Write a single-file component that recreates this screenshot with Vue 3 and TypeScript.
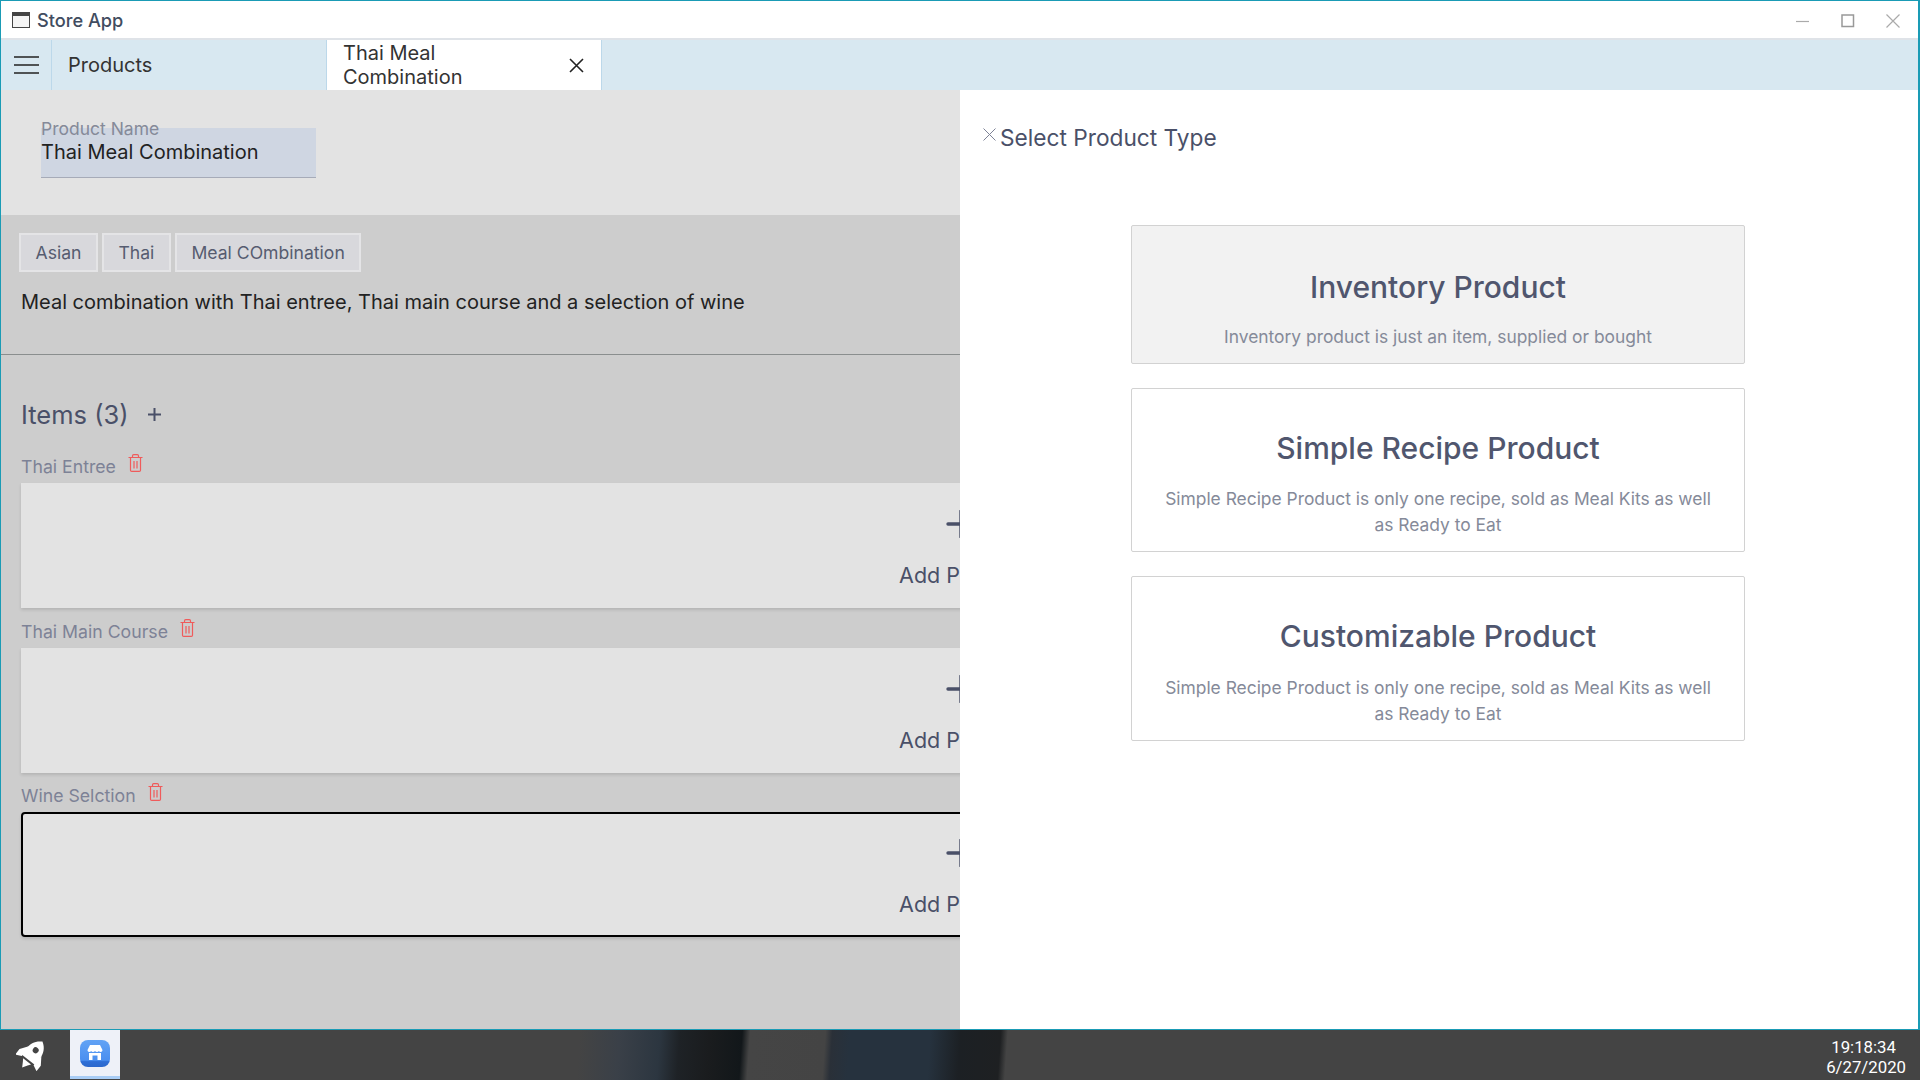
<template>
    <div class="desktop">
        <div class="window">
            <div class="titlebar">
                <svg class="app-icon" width="18" height="16" viewBox="0 0 18 16">
                    <rect x="0.5" y="0.5" width="17" height="15" fill="#dcdcdc" stroke="#444"/>
                    <rect x="1" y="1" width="16" height="3" fill="#444"/>
                    <rect x="1" y="4" width="16" height="11" fill="#f4f4f4"/>
                </svg>
                <span class="app-title">Store App</span>
                <div class="win-controls">
                    <svg width="14" height="14" viewBox="0 0 14 14"><path d="M0 7.500h13" stroke="#aaa" stroke-width="1.2"/></svg>
                    <svg width="14" height="14" viewBox="0 0 14 14"><rect x="1" y="1" width="11.500" height="11.500" fill="none" stroke="#999" stroke-width="1.500"/></svg>
                    <svg width="14" height="14" viewBox="0 0 14 14"><path d="M0.500 0.500l13 13M13.500 0.500l-13 13" stroke="#aaa" stroke-width="1.2"/></svg>
                </div>
            </div>
            <div class="tabbar">
                <div class="menu-btn">
                    <svg width="25" height="18" viewBox="0 0 25 18"><path d="M0 1h25M0 9h25M0 17h25" stroke="#222" stroke-width="1.700"/></svg>
                </div>
                <div class="tab">Products</div>
                <div class="tab tab-active">
                    <span class="tab-label">Thai Meal Combination</span>
                    <svg width="15" height="15" viewBox="0 0 15 15"><path d="M1 1l13 13M14 1L1 14" stroke="#222" stroke-width="1.600"/></svg>
                </div>
            </div>
            <div class="body">
                <div class="editor">
                    <div class="name-section">
                        <div class="name-field">
                            <label class="name-label">Product Name</label>
                            <div class="name-value">Thai Meal Combination</div>
                        </div>
                    </div>
                    <div class="details">
                        <div class="tags">
                            <span v-for="tag in tags" :key="tag" class="tag">{{ tag }}</span>
                        </div>
                        <p class="description">Meal combination with Thai entree, Thai main course and a selection of wine</p>
                    </div>
                    <div class="items">
                        <div class="items-head">
                            <span>Items ({{ groups.length }})</span>
                            <svg width="15" height="15" viewBox="0 0 15 15"><path d="M7.500 1v13M1 7.500h13" stroke="#4a5068" stroke-width="2"/></svg>
                        </div>
                        <div v-for="group in groups" :key="group.name" class="group">
                            <div class="group-head">
                                <span class="group-name">{{ group.name }}</span>
                                <svg class="trash" width="15" height="18" viewBox="0 0 15 18" fill="none" stroke="#ef5b5b" stroke-width="1.200">
                                    <path d="M0.500 3.500h14M4.500 3.500V2c0-.7.500-1.300 1.200-1.300h3.600c.7 0 1.200.6 1.200 1.300v1.500M2.500 3.500v12.700c0 .7.500 1.200 1.200 1.200h7.600c.7 0 1.200-.5 1.200-1.200V3.500M6 7v7.500M9 7v7.500"/>
                                </svg>
                            </div>
                            <div class="group-card" :class="{ selected: group.selected }">
                                <svg width="30" height="28" viewBox="0 0 30 28"><path d="M15 1v26M2 14h26" stroke="#4a5068" stroke-width="3.400" stroke-linecap="round"/></svg>
                                <span class="add-label">Add Product</span>
                            </div>
                        </div>
                    </div>
                </div>
                <aside class="drawer">
                    <div class="drawer-head">
                        <svg class="drawer-close" width="13" height="13" viewBox="0 0 13 13"><path d="M0.500 0.500l12 12M12.500 0.500l-12 12" stroke="#7d8296" stroke-width="1"/></svg>
                        <span>Select Product Type</span>
                    </div>
                    <div class="types">
                        <div v-for="type in types" :key="type.title" class="type-card" :class="{ hovered: type.hovered }">
                            <h3>{{ type.title }}</h3>
                            <p>{{ type.text }}</p>
                        </div>
                    </div>
                </aside>
            </div>
        </div>
        <div class="taskbar">
            <svg class="rocket" width="32" height="32" viewBox="0 0 32 32">
                <g transform="rotate(38 16 16)">
                    <path fill="#fff" d="M16 -1c6 3.500 8.500 9 8.500 15V22h-17v-8C7.500 8 10 2.500 16 -1z"/>
                    <path fill="#fff" d="M8 11L2.500 19v7l6-3zM24 11l5.500 8v7l-6-3z"/>
                    <path fill="#fff" d="M11 24h10l-2 3-3 5-3-5z"/>
                    <circle cx="16" cy="10" r="3" fill="#444"/>
                </g>
            </svg>
            <div class="task-app">
                <svg width="30" height="27" viewBox="0 0 30 27">
                    <defs>
                        <linearGradient id="appFill" x1="0" y1="0" x2="0" y2="1">
                            <stop offset="0" stop-color="#62a3f5"/>
                            <stop offset="0.75" stop-color="#4a8ff0"/>
                            <stop offset="0.8" stop-color="#2f6fd6"/>
                            <stop offset="1" stop-color="#2c68cc"/>
                        </linearGradient>
                    </defs>
                    <rect width="30" height="27" rx="8" fill="url(#appFill)"/>
                    <path fill="#fff" d="M10 5h10l2.500 5c0 1.200-.8 2-1.800 2-.8 0-1.400-.4-1.800-1-.4.600-1.100 1-1.900 1s-1.500-.4-2-1c-.5.600-1.200 1-2 1s-1.500-.4-1.900-1c-.4.600-1 1-1.800 1-1 0-1.800-.8-1.800-2z"/>
                    <path fill="#fff" d="M9 13h12v7h-3.500v-4.500h-5V20H9z"/>
                </svg>
            </div>
            <div class="jeans"></div>
            <div class="clock">
                <span class="clock-time">19:18:34</span>
                <span>6/27/2020</span>
            </div>
        </div>
    </div>
</template>

<script setup lang="ts">
interface Group {
    name: string
    selected?: boolean
}

interface ProductType {
    title: string
    text: string
    hovered?: boolean
}

const tags: string[] = ['Asian', 'Thai', 'Meal COmbination']

const groups: Group[] = [
    {name: 'Thai Entree'},
    {name: 'Thai Main Course'},
    {name: 'Wine Selction', selected: true},
]

const types: ProductType[] = [
    {title: 'Inventory Product', text: 'Inventory product is just an item, supplied or bought', hovered: true},
    {title: 'Simple Recipe Product', text: 'Simple Recipe Product is only one recipe, sold as Meal Kits as well as Ready to Eat'},
    {title: 'Customizable Product', text: 'Simple Recipe Product is only one recipe, sold as Meal Kits as well as Ready to Eat'},
]
</script>

<style>
html, body {
    margin: 0;
    overflow: hidden;
}
</style>

<style scoped>
.desktop {
    width: 1920px;
    height: 1080px;
    display: flex;
    flex-direction: column;
    font-family: Inter, "Liberation Sans", sans-serif;
    overflow: hidden;
}

.window {
    height: 1030px;
    box-sizing: border-box;
    border: 1px solid #1a9bb5;
    border-right-width: 2px;
    display: flex;
    flex-direction: column;
    background: #fff;
}

.titlebar {
    height: 37px;
    flex: none;
    display: flex;
    align-items: center;
    padding: 0 10px 0 11px;
    border-bottom: 2px solid #dfe3e8;
    background: #fff;
}

.app-title {
    margin-left: 7px;
    font-size: 18.200px;
    font-weight: 500;
    color: #414c60;
}

.win-controls {
    margin-left: auto;
    display: flex;
    gap: 31px;
    padding: 3px 8px 0 0;
}

.tabbar {
    height: 50px;
    flex: none;
    display: flex;
    background: #d8e8f1;
}

.menu-btn {
    width: 50px;
    flex: none;
    display: flex;
    align-items: center;
    justify-content: center;
    border-right: 1px solid #bcd8ea;
}

.tab {
    width: 275px;
    flex: none;
    box-sizing: border-box;
    padding-left: 16px;
    display: flex;
    align-items: center;
    font-size: 20px;
    color: #333;
    border-right: 1px solid #bcd8ea;
}

.tab-active {
    background: #fff;
    padding-right: 17px;
    justify-content: space-between;
    line-height: 24px;
}

.tab-label {
    width: 160px;
}

.body {
    position: relative;
    flex: 1;
    min-height: 0;
    overflow: hidden;
    background: #cdcdcd;
}

.editor {
    width: 960px;
    height: 100%;
    overflow: hidden;
}

.name-section {
    height: 125px;
    box-sizing: border-box;
    background: #e3e3e3;
    padding: 38px 0 0 40px;
}

.name-field {
    width: 275px;
    height: 50px;
    box-sizing: border-box;
    background: #cfd6e2;
    border-bottom: 1px solid #a6abb8;
    display: flex;
    flex-direction: column;
    position: relative;
}

.name-label {
    position: absolute;
    top: -10px;
    left: 0;
    font-size: 17.500px;
    color: #858a99;
}

.name-value {
    margin-top: 12px;
    font-size: 20px;
    color: #222;
}

.details {
    height: 140px;
    box-sizing: border-box;
    padding: 18px 0 0 18px;
    border-bottom: 1px solid #8a8e8e;
}

.tags {
    display: flex;
    gap: 4px;
}

.tag {
    height: 39px;
    box-sizing: border-box;
    padding: 0 14.500px;
    display: flex;
    align-items: center;
    background: #d8d8dc;
    border: 2px solid #e4e4e6;
    font-size: 17.600px;
    color: #565c70;
}

.description {
    margin: 18px 0 0 2px;
    font-size: 20px;
    line-height: 24px;
    color: #222;
}

.items {
    width: 1880px;
    padding: 44.500px 0 0 20px;
    color: #4a5068;
}

.items-head {
    display: flex;
    align-items: center;
    gap: 18px;
    height: 30px;
    font-size: 25.500px;
    color: #4a5068;
}

.group {
    margin-top: 11.500px;
}

.items-head + .group {
    margin-top: 25.500px;
}

.group-head {
    display: flex;
    align-items: flex-start;
    gap: 12.500px;
    height: 28px;
}

.group-name {
    margin-top: 1px;
    font-size: 17.700px;
    color: #7d8296;
}

.trash {
    margin-top: -1px;
}

.group-card {
    height: 125px;
    box-sizing: border-box;
    background: #e3e3e3;
    box-shadow: 0 2px 3px rgba(0, 0, 0, 0.12);
    display: flex;
    flex-direction: column;
    align-items: center;
    padding-top: 27px;
    gap: 24px;
}

.group-card.selected {
    border: 2px solid #000;
    border-radius: 4px;
    padding-top: 25px;
}

.add-label {
    margin-left: 3px;
    font-size: 21.500px;
    color: #4a5068;
}

.drawer {
    position: absolute;
    top: 0;
    bottom: 0;
    left: 959px;
    right: 0;
    background: #fff;
}

.drawer-head {
    display: flex;
    align-items: center;
    height: 30px;
    padding: 32px 0 0 23px;
    font-size: 22.700px;
    color: #4a5068;
}

.drawer-close {
    margin: -6px 4px 0 0;
}

.types {
    width: 614px;
    margin: 73px 0 0 171px;
    display: flex;
    flex-direction: column;
    gap: 24px;
}

.type-card {
    box-sizing: border-box;
    padding: 41px 24px 13.600px;
    border: 1px solid #d2d2d2;
    border-radius: 2px;
    text-align: center;
}

.type-card.hovered {
    background: #f2f2f2;
    padding-top: 42.500px;
}

.type-card h3 {
    margin: 0 0 19.300px;
    font-size: 30px;
    line-height: 36px;
    font-weight: 500;
    color: #50566e;
}

.type-card + .type-card + .type-card p {
    padding-top: 1px;
}

.type-card p {
    margin: 0;
    font-size: 17.400px;
    line-height: 26px;
    color: #858a99;
}

.taskbar {
    position: relative;
    flex: 1;
    background: #444;
    display: flex;
    align-items: center;
}

.rocket {
    margin-left: 16px;
}

.task-app {
    margin-left: 22px;
    width: 50px;
    height: 49px;
    align-self: flex-start;
    box-sizing: border-box;
    background: #eef1f8;
    border-bottom: 3px solid #a9cdf5;
    display: flex;
    align-items: center;
    justify-content: center;
}

.jeans {
    position: absolute;
    top: 0;
    bottom: 0;
    left: 575px;
    width: 435px;
    background: linear-gradient(94deg, #444 5px, #3a4048 45px, #2c3640 85px, #1e2226 105px, #1a1c1e 135px, #12171a 167px, #454545 175px, #444 250px, #2a3038 257px, #26323e 275px, #26323e 355px, #1c2024 385px, #1e2022 425px, #444 432px);
}

.clock {
    position: relative;
    margin-left: auto;
    padding: 4px 14px 0 0;
    display: flex;
    flex-direction: column;
    align-items: center;
    font-family: Roboto, sans-serif;
    font-size: 16.800px;
    line-height: 20px;
    color: #fff;
}

.clock-time {
    margin-right: 5px;
}
</style>
